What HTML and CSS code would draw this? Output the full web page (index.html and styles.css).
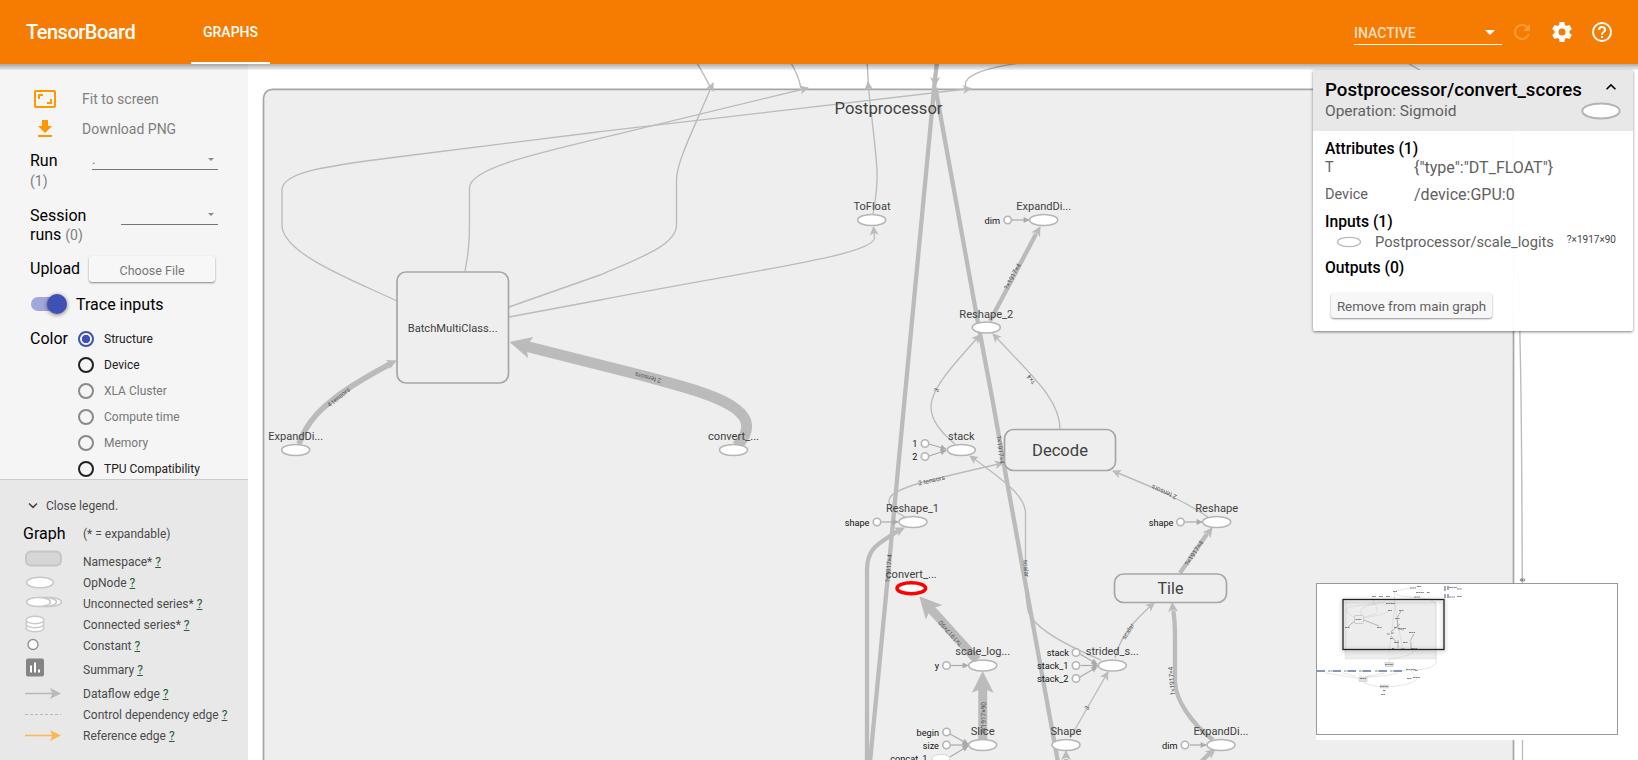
FILE: index.html
```html
<!DOCTYPE html>
<html lang="en">
<head>
<meta charset="utf-8">
<title>TensorBoard</title>
<link rel="stylesheet" href="styles.css">
</head>
<body>
<header class="toolbar">
  <div class="brand">TensorBoard</div>
  <div class="tab">GRAPHS</div>
  <div class="inactive"><span>INACTIVE</span><i class="caret"></i></div>
  <svg class="tool refresh" viewBox="0 0 24 24"><path d="M17.65 6.35A7.96 7.96 0 0 0 12 4a8 8 0 1 0 7.73 10h-2.08A6 6 0 1 1 12 6c1.66 0 3.14.69 4.22 1.78L13 11h7V4z"/></svg>
  <svg class="tool gear" viewBox="0 0 24 24"><path d="M19.43 12.98c.04-.32.07-.64.07-.98s-.03-.66-.07-.98l2.11-1.65c.19-.15.24-.42.12-.64l-2-3.46c-.12-.22-.39-.3-.61-.22l-2.49 1c-.52-.4-1.08-.73-1.69-.98l-.38-2.65A.49.49 0 0 0 14 2h-4c-.25 0-.46.18-.49.42l-.38 2.65c-.61.25-1.17.59-1.69.98l-2.49-1c-.23-.09-.49 0-.61.22l-2 3.46c-.13.22-.07.49.12.64l2.11 1.65c-.04.32-.07.65-.07.98s.03.66.07.98l-2.11 1.65c-.19.15-.24.42-.12.64l2 3.46c.12.22.39.3.61.22l2.49-1c.52.4 1.08.73 1.69.98l.38 2.65c.03.24.24.42.49.42h4c.25 0 .46-.18.49-.42l.38-2.65c.61-.25 1.17-.59 1.69-.98l2.49 1c.23.09.49 0 .61-.22l2-3.46c.12-.22.07-.49-.12-.64zM12 15.5a3.5 3.5 0 1 1 0-7 3.5 3.5 0 0 1 0 7z"/></svg>
  <svg class="tool" viewBox="0 0 24 24"><path d="M11 18h2v-2h-2v2zm1-16a10 10 0 1 0 0 20 10 10 0 0 0 0-20zm0 18a8 8 0 1 1 0-16 8 8 0 0 1 0 16zm0-14a4 4 0 0 0-4 4h2a2 2 0 1 1 4 0c0 2-3 1.75-3 5h2c0-2.25 3-2.5 3-5a4 4 0 0 0-4-4z"/></svg>
</header>
<div class="content">
  <aside class="sidebar">
    <section class="controls">
      <div class="action fit"><svg viewBox="0 0 24 24"><path d="M19 12h-2v3h-3v2h5v-5zM7 9h3V7H5v5h2V9zm14-6H3c-1.1 0-2 .9-2 2v14c0 1.1.9 2 2 2h18c1.1 0 2-.9 2-2V5c0-1.1-.9-2-2-2zm0 16H3V5h18v14z"/></svg><span>Fit to screen</span></div>
      <div class="action"><svg viewBox="0 0 24 24"><path d="M19 9h-4V3H9v6H5l7 7 7-7zM5 18v2h14v-2H5z"/></svg><span>Download PNG</span></div>
      <div class="picker run"><div>Run<br><small>(1)</small></div><div class="select wide"><span>.</span><i class="caret"></i></div></div>
      <div class="picker session"><div>Session<br>runs <small>(0)</small></div><div class="select"><i class="caret"></i></div></div>
      <div class="upload"><span>Upload</span><div class="button file">Choose File</div></div>
      <div class="trace"><div class="toggle"><i></i></div><span>Trace inputs</span></div>
      <div class="color">
        <span class="color-title">Color</span>
        <ul>
          <li class="on"><i></i>Structure</li>
          <li><i></i>Device</li>
          <li class="off"><i></i>XLA Cluster</li>
          <li class="off"><i></i>Compute time</li>
          <li class="off"><i></i>Memory</li>
          <li><i></i>TPU Compatibility</li>
        </ul>
      </div>
    </section>
    <section class="legend">
      <div class="close"><svg viewBox="0 0 24 24"><path d="M7.41 7.84L12 12.42l4.59-4.58L18 9.25l-6 6-6-6z"/></svg>Close legend.</div>
      <div class="legend-head"><b>Graph</b><span>(* = expandable)</span></div>
      <div class="item h22"><svg width="44" height="22"><rect x="4" y="1.5" width="35" height="14" rx="5" fill="#d6d6d6" stroke="#c6c6c6" stroke-width="2"/></svg><span>Namespace* <u>?</u></span></div>
      <div class="item"><svg width="44" height="20"><ellipse cx="18" cy="9.500" rx="13.5" ry="5.3" class="lg"/></svg><span>OpNode <u>?</u></span></div>
      <div class="item"><svg width="44" height="20"><ellipse cx="26.500" cy="8" rx="13" ry="4.500" class="lg"/><ellipse cx="21.500" cy="8" rx="13" ry="4.500" class="lg"/><ellipse cx="16.500" cy="8" rx="12" ry="4.500" class="lg"/></svg><span>Unconnected series* <u>?</u></span></div>
      <div class="item"><svg width="44" height="20"><ellipse cx="13" cy="13" rx="9" ry="3.700" class="lg"/><ellipse cx="13" cy="9" rx="9" ry="3.700" class="lg"/><ellipse cx="13" cy="5" rx="9" ry="3.700" class="lg"/></svg><span>Connected series* <u>?</u></span></div>
      <div class="item"><svg width="44" height="20"><circle cx="11" cy="8.500" r="5" fill="#fff" stroke="#8f8f8f" stroke-width="1.300"/></svg><span>Constant <u>?</u></span></div>
      <div class="item h26"><svg width="44" height="24"><rect x="4" y="1.500" width="18" height="18" rx="2" fill="#848484"/><path d="M9 15.500V8.500M13 15.500V5.500M17 15.500v-3" stroke="#fff" stroke-width="2"/></svg><span>Summary <u>?</u></span></div>
      <div class="item"><svg width="44" height="20"><path d="M3 9.500h28" stroke="#b9b9b9" stroke-width="1.500"/><path d="M39 9.500l-11-5.500 2.500 5.500-2.500 5.500z" fill="#b9b9b9"/></svg><span>Dataflow edge <u>?</u></span></div>
      <div class="item"><svg width="44" height="20"><path d="M3 9.500h36" stroke="#b9b9b9" stroke-width="1.200" stroke-dasharray="3 2"/></svg><span>Control dependency edge <u>?</u></span></div>
      <div class="item"><svg width="44" height="20"><path d="M3 9.500h28" stroke="#ffb74d" stroke-width="1.500"/><path d="M39 9.500l-11-5.500 2.500 5.500-2.500 5.500z" fill="#ffb74d"/></svg><span>Reference edge <u>?</u></span></div>
    </section>
  </aside>
  <main class="graph">
    <svg class="canvas" viewBox="248 64 1390 696">
      <defs>
        <marker id="a" viewBox="0 0 10 10" refX="9" refY="5" markerWidth="10" markerHeight="9" markerUnits="userSpaceOnUse" orient="auto"><path d="M0 0L10 5 0 10 2.500 5z" fill="#bbb"/></marker>
        <marker id="m" viewBox="0 0 10 10" refX="9" refY="5" markerWidth="11" markerHeight="10" markerUnits="userSpaceOnUse" orient="auto"><path d="M0 0L10 5 0 10 2.500 5z" fill="#bbb"/></marker>
        <marker id="b" viewBox="0 0 22 22" refX="6" refY="11" markerWidth="22" markerHeight="22" markerUnits="userSpaceOnUse" orient="auto"><path d="M0 0L22 11 0 22 5 11z" fill="#bbb"/></marker>
        <marker id="t" viewBox="0 0 10 10" refX="9" refY="5" markerWidth="7" markerHeight="6" markerUnits="userSpaceOnUse" orient="auto"><path d="M0 0L10 5 0 10z" fill="#aaa"/></marker>
      </defs>
      <rect x="263.500" y="89.300" width="1250" height="720" rx="9" fill="#eee" stroke="#a6a6a6" stroke-width="1.700"/>
      <g class="edges">
        <path d="M397 301C355 281 282 254 282 225V190C282 172 326 166 397 157C460 149 530 140 600 131.700L971 88.500" marker-end="url(#a)"/>
        <path d="M465 271C468 255 469.500 245 469.500 220V188C469.500 169 530 155 600 138.300L808 88" marker-end="url(#a)"/>
        <path d="M509 307L600 275C640 258 676.500 245 676.500 225V180C676.500 163 690 137 713 83" marker-end="url(#a)"/>
        <path d="M509 317L600 300C755 270 874 255 874.500 238L873.500 227" marker-end="url(#a)"/>
        <path d="M873 214C876 200 877.500 180 877 170C876 150 870 105 868 82" marker-end="url(#a)"/>
        <path d="M868.500 86L867 60M697 63C702 72 706 78 710 87M791 63C797 73 799 78 801 88M966 87C962 78 977 69 1020 63M1408 63Q1414 67 1420 70"/>
        <path d="M955 444C939 431 931 418 931 407C931 389 952 366 980 335" marker-end="url(#a)"/>
        <path d="M1060 429C1060 400 1034 378 993 334" marker-end="url(#a)"/>
        <path d="M1101 660C1082 652 1032 630 1028 610Q1025.500 598 1025.500 580V513C1025 498 1011 485 970 456" marker-end="url(#a)"/>
        <path d="M905 517L893 510C885 500 886 493 920 483Q950 475 1003 463" marker-end="url(#a)"/>
        <path d="M1208 517C1186 502 1160 490 1113 471" marker-end="url(#a)"/>
        <path d="M1115 658C1120 638 1131 623 1154 603" marker-end="url(#a)"/>
        <path d="M1070 738L1108 672" marker-end="url(#a)"/>
        <path d="M1517 250C1518 290 1520 310 1520 340C1522 420 1522.500 500 1522.500 760"/>
        <path class="mid" d="M937 62L934.500 84 904.500 400 892 533 870 762M935.500 88L978 323 992.500 400 1006.700 480 1023 570 1058 762"/>
        <path class="mid" d="M867 762V570C867 548 878 544 898 531"/><path d="M898 531L904 528" marker-end="url(#m)"/>
        <path class="mid" d="M990 321L1036 234"/><path d="M1035 236L1040 227" marker-end="url(#m)"/>
        <path class="mid" d="M1180 573L1207 534"/><path d="M1206 536L1212 528" marker-end="url(#m)"/>
        <path class="mid" d="M1213 740C1190 722 1176 700 1175 682V640Q1175 620 1173.300 611"/><path d="M1173 612L1172.300 603" marker-end="url(#m)"/>
        <path class="mid" d="M1201 762L1210 753"/><path d="M1208 755L1215 749.500" marker-end="url(#m)"/>
        <path class="mid" d="M1066 765V759"/><path d="M1066 758V751" marker-end="url(#m)"/>
        <path class="w5" d="M299 444C308 418 326 405 340 394Q360 380 390 364"/><path d="M389 364L396 361" marker-end="url(#m)"/>
        <path class="w11" d="M737 446C751 431 749 419 736 409C717 394 672 384 648 377L525 346" marker-end="url(#b)"/>
        <path class="w9" d="M977 660L930 608" marker-end="url(#b)"/>
        <path class="w9" d="M982.700 740V687" marker-end="url(#b)"/>
        <path d="M935 80V86" marker-end="url(#m)"/>
      </g>
      <g class="boxes"><rect x="397" y="272" width="111.500" height="111" rx="9"/><rect x="1004.500" y="429.500" width="111" height="41" rx="9"/><rect x="1114.500" y="574" width="112" height="28.500" rx="9"/></g>
      <g class="stubs">
        <path d="M881 522H898" marker-end="url(#t)"/>
        <path d="M1012 220H1029" marker-end="url(#t)"/><path d="M1185 522H1202" marker-end="url(#t)"/><path d="M951 665.500H968" marker-end="url(#t)"/><path d="M1190 745H1206" marker-end="url(#t)"/>
        <path d="M929 444L946 449" marker-end="url(#t)"/><path d="M929 456L946 450.500" marker-end="url(#t)"/>
        <path d="M1080 654L1097 664" marker-end="url(#t)"/><path d="M1081 665.500H1098" marker-end="url(#t)"/><path d="M1080 677L1097 667" marker-end="url(#t)"/>
        <path d="M950 734L968 744" marker-end="url(#t)"/><path d="M951 745H968" marker-end="url(#t)"/><path d="M950 757L968 746" marker-end="url(#t)"/>
      </g>
      <g class="nodes">
        <ellipse cx="871.700" cy="220" rx="14" ry="5.500"/><ellipse cx="1043.700" cy="220" rx="14" ry="5.500"/><ellipse cx="986.300" cy="327.500" rx="14" ry="5.500"/><ellipse cx="961.300" cy="450" rx="14" ry="5.500"/><ellipse cx="295.700" cy="450" rx="14" ry="5.500"/><ellipse cx="733.500" cy="450" rx="14" ry="5.500"/><ellipse cx="913" cy="522" rx="14" ry="5.500"/><ellipse cx="1216.700" cy="522" rx="14" ry="5.500"/><ellipse cx="982.700" cy="665.500" rx="14" ry="5.500"/><ellipse cx="1112.300" cy="665.500" rx="14" ry="5.500"/><ellipse cx="982.700" cy="745" rx="14" ry="5.500"/><ellipse cx="1066" cy="745" rx="14" ry="5.500"/><ellipse cx="1221" cy="745" rx="14" ry="5.500"/>
        <ellipse class="selected" cx="911.300" cy="588.300" rx="14.300" ry="5.500"/>
        <circle cx="1007.700" cy="220" r="3.700"/><circle cx="925" cy="443.500" r="3.700"/><circle cx="925" cy="456.500" r="3.700"/><circle cx="877" cy="522" r="3.700"/><circle cx="1180.500" cy="522" r="3.700"/><circle cx="946.500" cy="665.500" r="3.700"/><circle cx="1076" cy="652.500" r="3.700"/><circle cx="1076" cy="665.500" r="3.700"/><circle cx="1076" cy="678.500" r="3.700"/><circle cx="946.500" cy="732" r="3.700"/><circle cx="946.500" cy="745" r="3.700"/><circle cx="1185" cy="745" r="3.700"/>
        <ellipse class="dashed" cx="941" cy="758.500" rx="9" ry="4"/>
      </g>
      <g class="labels">
        <text x="888.500" y="114" class="big" textLength="108" lengthAdjust="spacingAndGlyphs">Postprocessor</text><text x="1060" y="456" class="big" textLength="56" lengthAdjust="spacingAndGlyphs">Decode</text><text x="1170.500" y="594" class="big" textLength="26" lengthAdjust="spacingAndGlyphs">Tile</text>
        <text x="452.700" y="331.500" textLength="90" lengthAdjust="spacingAndGlyphs">BatchMultiClass...</text><text x="295.700" y="439.500" textLength="55" lengthAdjust="spacingAndGlyphs">ExpandDi...</text><text x="733.500" y="439.500" textLength="51" lengthAdjust="spacingAndGlyphs">convert_...</text><text x="872" y="209.500" textLength="37" lengthAdjust="spacingAndGlyphs">ToFloat</text><text x="1043.700" y="209.500" textLength="55" lengthAdjust="spacingAndGlyphs">ExpandDi...</text><text x="986.300" y="317.500" textLength="54" lengthAdjust="spacingAndGlyphs">Reshape_2</text><text x="961.300" y="439.500" textLength="26.500" lengthAdjust="spacingAndGlyphs">stack</text><text x="912.500" y="511.500" textLength="53" lengthAdjust="spacingAndGlyphs">Reshape_1</text><text x="1216.700" y="511.500" textLength="43" lengthAdjust="spacingAndGlyphs">Reshape</text><text x="911.300" y="577.500" textLength="51" lengthAdjust="spacingAndGlyphs">convert_...</text><text x="982.700" y="654.500" textLength="55" lengthAdjust="spacingAndGlyphs">scale_log...</text><text x="1112.300" y="654.500" textLength="53" lengthAdjust="spacingAndGlyphs">strided_s...</text><text x="982.700" y="734.500" textLength="24" lengthAdjust="spacingAndGlyphs">Slice</text><text x="1066" y="734.500" textLength="31" lengthAdjust="spacingAndGlyphs">Shape</text><text x="1221" y="734.500" textLength="55" lengthAdjust="spacingAndGlyphs">ExpandDi...</text>
      </g>
      <g class="inputs"><text x="1000" y="223.500">dim</text><text x="917.500" y="447">1</text><text x="917.500" y="460">2</text><text x="869.500" y="525.500">shape</text><text x="1173.500" y="525.500">shape</text><text x="939" y="669">y</text><text x="1069" y="656">stack</text><text x="1068.500" y="669">stack_1</text><text x="1068.500" y="682">stack_2</text><text x="939" y="735.500">begin</text><text x="939" y="748.500">size</text><text x="927.500" y="761.500">concat_1</text><text x="1177.500" y="748.500">dim</text></g>
      <g class="edge-labels">
        <text transform="translate(340 399) rotate(-39)">4 tensors</text><text transform="translate(648.500 375.500) rotate(195)">2 tensors</text><text transform="translate(1014.500 277.500) rotate(-62)">?×1917×4</text><text transform="translate(938.500 391) rotate(-65)">3</text><text transform="translate(1033 378) rotate(229)">?×4</text><text transform="translate(998 450) rotate(83)">?×1917×4</text><text transform="translate(932 482.500) rotate(-13)">2 tensors</text><text transform="translate(1165 490) rotate(204)">2 tensors</text><text transform="translate(891 568.500) rotate(-86)">?×1917×4</text><text transform="translate(1024 568.500) rotate(86)">scalar</text><text transform="translate(952 632) rotate(228)">?×1917×90</text><text transform="translate(985.500 718) rotate(-90)">?×1917×90</text><text transform="translate(1196 554.500) rotate(-57)">?×1917×4</text><text transform="translate(1130 632.500) rotate(-58)">scalar</text><text transform="translate(1174 681) rotate(265)">1×1917×4</text><text transform="translate(1089 709) rotate(-60)">3</text><text transform="translate(1525 580) rotate(-90)">8</text>
      </g>
    </svg>
    <section class="info">
      <div class="info-head">
        <div><h2>Postprocessor/convert_scores</h2><p>Operation: Sigmoid</p></div>
        <div class="info-icons"><svg width="24" height="24" viewBox="0 0 24 24"><path d="M7.410 15.410L12 10.830l4.590 4.580L18 14l-6-6-6 6z"/></svg><svg width="42" height="20"><ellipse cx="21" cy="10" rx="18.700" ry="7.500" fill="#fff" stroke="#b3b3b3" stroke-width="2"/></svg></div>
      </div>
      <div class="info-body">
        <h3>Attributes (1)</h3>
        <dl><dt>T</dt><dd>{"type":"DT_FLOAT"}</dd><dt>Device</dt><dd>/device:GPU:0</dd></dl>
        <h3>Inputs (1)</h3>
        <div class="input-row"><svg width="26" height="12"><ellipse cx="13" cy="6" rx="11.500" ry="4.700" fill="#fff" stroke="#bbb" stroke-width="1.300"/></svg><span>Postprocessor/scale_logits</span><small>?×1917×90</small></div>
        <h3>Outputs (0)</h3>
        <div class="button remove">Remove from main graph</div>
      </div>
    </section>
    <div class="minimap">
      <svg viewBox="1317 584 300 150">
        <rect x="1345" y="602" width="91" height="57" fill="#ededed" stroke="#ddd" stroke-width=".5"/>
        <g class="mini-lines"><path d="M1394 591L1395 606 1389 652M1395 606L1403 651M1395 591L1420 586M1395 593C1400 600 1434 594 1436 605V660C1437 668 1425 670 1400 671M1356 618C1343 612 1345 608 1350 607L1385 602M1361 615V610Q1361 607 1375 604M1365 617C1375 614 1378 614 1377 608L1372 598M1364 618C1380 615 1389 613 1389 610"/><path d="M1389 663V659Q1414 656 1414 650M1325 673Q1345 676 1362 679M1342 673L1356 676M1358 673L1362 677M1370 674L1367 678M1385 673L1365 677M1398 673Q1380 677 1367 677M1363 682Q1370 686 1384 687M1384 687Q1415 685 1417 678L1411 671M1384 690V695"/></g>
        <g class="mini-dark"><path d="M1348 627Q1352 622 1356 621M1364 620L1379 626M1391 636L1397 643M1398 640V648M1401 611L1397 618M1391 632L1400 624M1397 618L1398 629 1404 630M1410 641L1414 634M1411 649V642"/></g>
        <rect x="1354.500" y="615.500" width="9" height="8" rx="1" fill="#ececec" stroke="#aaa" stroke-width=".5"/>
        <g fill="#e0e0e0" stroke="#bbb" stroke-width=".4"><rect x="1385" y="662.500" width="8.500" height="4"/><rect x="1359" y="677" width="8" height="4.500"/><rect x="1380.500" y="685" width="8" height="3"/></g>
        <path class="ticks" d="M1355.500 619.500h6M1345 627.500h5M1377 627.500h5M1388 610.500h4M1399 610.500h5M1395 618.500h5M1398 628.500h8M1394 627.500h3M1391 633h3M1387 634h3M1409 632.500h6M1390 638.500h3M1394 642.500h5M1403 642.500h5M1392 648.500h2M1411 648.500h6M1401 649h4M1386 603.500h9M1372 596.500h4M1379 596.500h4M1386 596.500h4M1393 591.500h4M1410 588h6M1417 586.500h4M1416 592.500h8M1427 592.500h3M1414 597h6M1385 664.500h8M1360 678.500h6M1380 686.500h8M1383 690.500h3M1381 694.500h4M1407 678.500h5M1413 677.500h7M1406 669.500h10M1415 670.500h3"/>
        <path d="M1317 671h8M1333 671h8M1348 671h8M1363 671h8M1379 671h8M1394 671h8" stroke="#8795b8" stroke-width="2"/>
        <path class="ticks" d="M1328 671h5M1344 671h4M1359 671h4M1375 671h4M1390 671h4M1449 587.500h8M1457 589h5M1449 597h6M1457 596.500h5"/>
        <path d="M1445 586v5M1448 586v4M1445 594v4M1448 594v4" stroke="#8795aa" stroke-width="1.600"/>
        <rect class="viewport" x="1343" y="599.500" width="101" height="50"/>
      </svg>
    </div>
  </main>
</div>
</body>
</html>
```
FILE: styles.css
```css
* { box-sizing: border-box; }
body { margin: 0; width: 1638px; height: 760px; overflow: hidden; font-family: Roboto, sans-serif; background: #fff; color: #000; }
.toolbar { height: 64px; background: #f57c00; color: #fff; display: flex; align-items: center; padding-right: 24px; }
.brand { width: 191px; padding-left: 26px; font-size: 20px; font-weight: 500; letter-spacing: -.5px; }
.tab { width: 79px; height: 64px; line-height: 65px; text-align: center; font-size: 14px; font-weight: 500; border-bottom: 2px solid #fff; }
.inactive { margin-left: auto; width: 148px; height: 28px; margin-right: 8px; margin-top: -3px; border-bottom: 1px solid #fff; display: flex; align-items: center; justify-content: space-between; padding: 5px 7px 0 0; font-size: 14px; color: #fddfc1; font-weight: 500; }
.caret { display: block; width: 0; border: 5px solid transparent; border-top-color: currentColor; border-bottom: 0; }
.inactive .caret { color: #fff; }
.tool { width: 24px; height: 24px; margin-left: 16px; fill: #fff; }
.tool.refresh { margin-left: 0; fill: #f9a14b; opacity: .8; }
.content { display: flex; height: 696px; position: relative; }
.content::after { content: ""; position: absolute; top: 0; left: 0; right: 0; height: 6px; background: linear-gradient(rgba(0,0,0,.32), rgba(0,0,0,.05)); z-index: 3; }
.sidebar { width: 248px; flex: none; display: flex; flex-direction: column; }
.controls { height: 415px; background: #f5f5f5; padding: 20px 30px 0; }
.action { display: flex; align-items: center; height: 30px; color: #7f7f7f; font-size: 14px; }
.action svg { width: 24px; height: 24px; margin: 0 25px 0 3px; fill: #ff9800; }
.fit svg { width: 26px; margin: 0 24px 0 2px; }
.picker { display: flex; justify-content: space-between; font-size: 16px; }
.picker small { font-size: 14px; color: #7f7f7f; }
.run { margin-top: 7px; line-height: 19.500px; }
.session { margin-top: 15px; line-height: 19px; }
.select { width: 97px; height: 20px; margin-top: -1px; border-bottom: 1px solid #757575; display: flex; justify-content: flex-end; align-items: center; padding-right: 4px; color: #757575; font-size: 14px; }
.select.wide { width: 126px; justify-content: space-between; }
.select .caret { border-width: 3.5px; border-bottom: 0; color: #8a8a8a; }
.upload { display: flex; align-items: center; height: 27px; margin-top: 10px; font-size: 16px; gap: 9px; }
.button { background: #f7f7f7; box-shadow: 0 1px 2px rgba(0,0,0,.45); border-radius: 3px; color: #777; text-align: center; }
.file { width: 126px; height: 26px; line-height: 29px; font-size: 12.500px; }
.trace { display: flex; align-items: center; margin-top: 9.500px; height: 25px; font-size: 16px; gap: 9px; }
.toggle { width: 37px; height: 20px; display: flex; align-items: center; position: relative; }
.toggle::before { content: ""; width: 34px; height: 14px; margin-left: 1px; border-radius: 7px; background: #9fa8da; }
.toggle i { position: absolute; right: 0; width: 20px; height: 20px; border-radius: 50%; background: #3f51b5; box-shadow: 0 1px 4px rgba(0,0,0,.5); }
.color { display: flex; margin-top: 9.500px; }
.color-title { width: 48px; font-size: 16px; line-height: 26px; }
.color ul { list-style: none; margin: 0; padding: 0; }
.color li { display: flex; height: 26px; align-items: center; font-size: 12px; color: #212121; white-space: nowrap; }
.color li i { width: 16px; height: 16px; border: 2px solid #212121; border-radius: 50%; margin-right: 10px; }
.color li.off { color: #777; }
.color li.off i { border-color: #8a8a8a; }
.color li.on i { border-color: #3f51b5; background: radial-gradient(circle, #3f51b5 3.8px, #f5f5f5 4.5px); }
.legend { flex: 1; background: #e8e8e8; border-top: 1px solid #ccc; padding: 15px 0 0 22px; font-size: 12px; color: #4a4a4a; }
.close { display: flex; align-items: center; height: 22px; }
.close svg { width: 18px; height: 18px; margin: 0 4px 0 2px; fill: #424242; }
.legend-head { display: flex; align-items: center; height: 33px; }
.legend-head b { width: 61px; font-weight: 400; font-size: 16px; color: #000; padding-left: 1px; }
.item { display: flex; height: 21px; }
.item svg { margin-right: 17px; flex: none; }
.item span { line-height: 21px; white-space: nowrap; }
.item.h22 { height: 23px; }
.item.h22 span { line-height: 24px; }
.item.h26 { height: 27px; }
.item.h26 span { line-height: 27px; }
.item u { color: #255f35; }
.lg { fill: #fff; stroke: #c8c8c8; stroke-width: 1.5; }
.graph { flex: 1; position: relative; overflow: hidden; }
.canvas { display: block; width: 1390px; height: 696px; }
.edges path { fill: none; stroke: #bbb; stroke-width: 1.35; }
.edges .mid { stroke-width: 4.3; }
.edges .w5 { stroke-width: 5.5; }
.edges .w9 { stroke-width: 9; }
.edges .w11 { stroke-width: 11; }
.boxes rect { fill: #eee; stroke: #a6a6a6; stroke-width: 1.7; }
.stubs path { stroke: #aaa; stroke-width: 1.2; }
.nodes ellipse, .nodes circle { fill: #fff; stroke: #b5b5b5; stroke-width: 1.6; }
.nodes .selected { stroke: #f00; stroke-width: 3.5; }
.nodes .dashed { stroke: #c4c4c4; stroke-width: 1; stroke-dasharray: 2 1; }
.labels text { font-size: 11.5px; fill: #414141; text-anchor: middle; }
.labels .big { font-size: 16.800px; }
.inputs text { font-size: 9.2px; fill: #111; text-anchor: end; }
.edge-labels text { font-size: 6.500px; fill: #555; text-anchor: middle; }
.info { position: absolute; left: 1065px; top: 6px; width: 320px; height: 261px; background: rgba(255,255,255,.96); box-shadow: 0 1px 3px rgba(0,0,0,.5); z-index: 4; border-radius: 2px; }
.info-head { height: 61px; background: #e8e8e8; display: flex; justify-content: space-between; padding: 9px 11px 0 12px; }
.info-head > div:first-child { width: 255px; white-space: nowrap; }
.info h2 { margin: 0; font-size: 18.700px; line-height: 22px; font-weight: 500; }
.info p { margin: 0; font-size: 15.500px; line-height: 21px; color: #616161; }
.info-icons { display: flex; flex-direction: column; align-items: flex-end; }
.info-icons svg:first-child { width: 20px; height: 20px; margin: -2px 1px 4px 0; }
.info-body { padding: 8px 12px; color: #616161; }
.info h3 { margin: 0; color: #000; font-size: 15.700px; font-weight: 500; line-height: 20px; }
.info dl { margin: 0 0 8px; display: grid; grid-template-columns: 89px 1fr; row-gap: 9px; line-height: 18px; font-size: 16px; }
.info dt { font-size: 14.5px; }
.info dd { margin: 0; }
.input-row { display: flex; align-items: center; height: 19px; margin-bottom: 7px; font-size: 14.700px; }
.input-row svg { margin: 0 13px 0 11px; }
.input-row small { font-size: 10px; margin-left: 13px; margin-top: -5px; color: #444; }
.remove { width: 161px; height: 25px; margin: 15px 0 0 6px; line-height: 27px; font-size: 13.300px; color: #616161; }
.minimap { position: absolute; left: 1068px; top: 519px; width: 302px; height: 157px; background: #fff; }
.minimap svg { display: block; width: 302px; height: 152px; border: 1px solid #999; }
.mini-lines path { fill: none; stroke: #ccc; stroke-width: .5; }
.mini-dark path { fill: none; stroke: #999; stroke-width: .7; }
.ticks { stroke: #777; stroke-width: .9; stroke-dasharray: 2 .4; }
.viewport { fill: none; stroke: #222; stroke-width: 1.3; filter: drop-shadow(0 1px 2px rgba(0,0,0,.4)); }
```
